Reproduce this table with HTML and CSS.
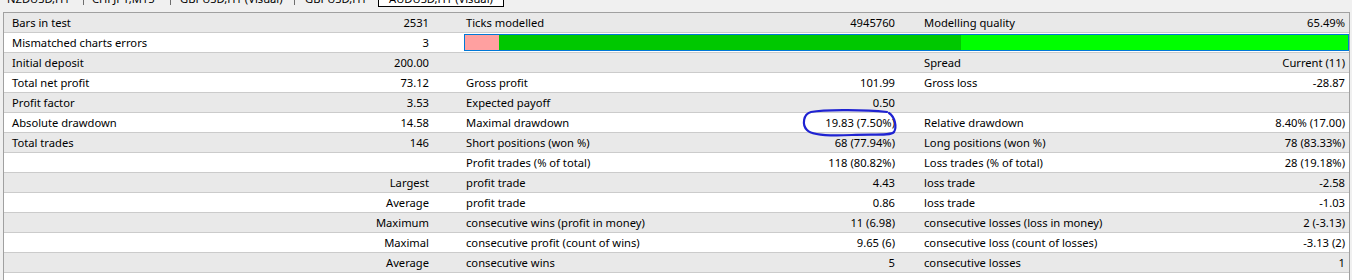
FILE: index.html
```html
<!DOCTYPE html>
<html>
<head>
<meta charset="utf-8">
<link rel="stylesheet" href="styles.css">
</head>
<body>
<div class="tabs">
  <span class="tab t1">NZDUSD,H1</span><span class="sep"></span>
  <span class="tab t2">CHFJPY,M15</span><span class="sep"></span>
  <span class="tab t3">GBPUSD,H1 (Visual)</span><span class="sep"></span>
  <span class="tab t4">GBPUSD,H1</span>
  <span class="tab active">AUDUSD,H1 (Visual)</span>
</div>
<div class="report">
  <div class="row alt">
    <div class="c l1">Bars in test</div><div class="c v1">2531</div>
    <div class="c l2">Ticks modelled</div><div class="c v2">4945760</div>
    <div class="c l3">Modelling quality</div><div class="c v3">65.49%</div>
  </div>
  <div class="row">
    <div class="c l1">Mismatched charts errors</div><div class="c v1">3</div>
    <div class="c barcell">
      <div class="bar"><span class="seg pink"></span><span class="seg dark"></span><span class="seg bright"></span></div>
    </div>
  </div>
  <div class="row alt">
    <div class="c l1">Initial deposit</div><div class="c v1">200.00</div>
    <div class="c l2"></div><div class="c v2"></div>
    <div class="c l3">Spread</div><div class="c v3">Current (11)</div>
  </div>
  <div class="row">
    <div class="c l1">Total net profit</div><div class="c v1">73.12</div>
    <div class="c l2">Gross profit</div><div class="c v2">101.99</div>
    <div class="c l3">Gross loss</div><div class="c v3">-28.87</div>
  </div>
  <div class="row alt">
    <div class="c l1">Profit factor</div><div class="c v1">3.53</div>
    <div class="c l2">Expected payoff</div><div class="c v2">0.50</div>
    <div class="c l3"></div><div class="c v3"></div>
  </div>
  <div class="row">
    <div class="c l1">Absolute drawdown</div><div class="c v1">14.58</div>
    <div class="c l2">Maximal drawdown</div><div class="c v2">19.83 (7.50%)</div>
    <div class="c l3">Relative drawdown</div><div class="c v3">8.40% (17.00)</div>
  </div>
  <div class="row alt">
    <div class="c l1">Total trades</div><div class="c v1">146</div>
    <div class="c l2">Short positions (won %)</div><div class="c v2">68 (77.94%)</div>
    <div class="c l3">Long positions (won %)</div><div class="c v3">78 (83.33%)</div>
  </div>
  <div class="row">
    <div class="c l1"></div><div class="c v1"></div>
    <div class="c l2">Profit trades (% of total)</div><div class="c v2">118 (80.82%)</div>
    <div class="c l3">Loss trades (% of total)</div><div class="c v3">28 (19.18%)</div>
  </div>
  <div class="row alt">
    <div class="c l1"></div><div class="c v1">Largest</div>
    <div class="c l2">profit trade</div><div class="c v2">4.43</div>
    <div class="c l3">loss trade</div><div class="c v3">-2.58</div>
  </div>
  <div class="row">
    <div class="c l1"></div><div class="c v1">Average</div>
    <div class="c l2">profit trade</div><div class="c v2">0.86</div>
    <div class="c l3">loss trade</div><div class="c v3">-1.03</div>
  </div>
  <div class="row alt">
    <div class="c l1"></div><div class="c v1">Maximum</div>
    <div class="c l2">consecutive wins (profit in money)</div><div class="c v2">11 (6.98)</div>
    <div class="c l3">consecutive losses (loss in money)</div><div class="c v3">2 (-3.13)</div>
  </div>
  <div class="row">
    <div class="c l1"></div><div class="c v1">Maximal</div>
    <div class="c l2">consecutive profit (count of wins)</div><div class="c v2">9.65 (6)</div>
    <div class="c l3">consecutive loss (count of losses)</div><div class="c v3">-3.13 (2)</div>
  </div>
  <div class="row alt">
    <div class="c l1"></div><div class="c v1">Average</div>
    <div class="c l2">consecutive wins</div><div class="c v2">5</div>
    <div class="c l3">consecutive losses</div><div class="c v3">1</div>
  </div>
  <svg class="circle" width="100" height="36" viewBox="0 0 100 36">
    <path d="M87 7 C60 4 22 5 11 7 C3 9 2 20 7 25 C12 31 32 31 52 30 C72 29 91 31 94 27 C97 22 95 12 89 8" fill="none" stroke="#1f23d2" stroke-width="2.2" stroke-linecap="round"/>
  </svg>
</div>
</body>
</html>
```

FILE: styles.css
```css
html, body {
  margin: 0;
  padding: 0;
  background: #f0f0f0;
  font-family: "Noto Sans", "Open Sans", sans-serif;
  font-size: 11.2px;
  color: #000;
}

.tabs {
  height: 12px;
  overflow: hidden;
  display: flex;
  align-items: flex-start;
  padding-left: 7px;
  background: #f0f0f0;
}

.tab {
  display: block;
  flex: none;
  line-height: 16px;
  margin-top: -9px;
  white-space: nowrap;
  color: #000;
}

.t1 { width: 76px; }
.t2 { width: 78px; margin-left: 8px; }
.t3 { width: 114px; margin-left: 9px; }
.t4 { width: 73px; margin-left: 10px; }

.sep {
  display: block;
  flex: none;
  width: 1px;
  height: 5px;
  background: #6e6e6e;
}

.tab.active {
  width: 114px;
  height: 15px;
  padding-left: 10px;
  background: #fff;
  border: 1px solid #000;
  border-top: none;
  margin-top: -9px;
}

.report {
  position: relative;
  margin-left: 3px;
  width: 1345px;
  height: 267px;
  background: #fff;
  border-top: 1px solid #a0a0a0;
  border-left: 1px solid #a0a0a0;
  border-right: 1px solid #a0a0a0;
}

.row {
  display: grid;
  grid-template-columns: 236px 195px 225px 241px 219px 1fr;
  height: 19px;
  line-height: 19px;
  border-bottom: 1px solid #cbcbcb;
  background: #fff;
}

.row.alt {
  background: #e9e9e9;
}

.c {
  white-space: nowrap;
  overflow: hidden;
}

.l1 { padding-left: 8px; }
.v1 { text-align: right; padding-right: 6px; }
.l2 { padding-left: 31px; }
.v2 { text-align: right; padding-right: 6px; }
.l3 { padding-left: 23px; }
.v3 { text-align: right; padding-right: 4px; }

.barcell {
  grid-column: 3 / 7;
  display: flex;
  align-items: center;
  padding-left: 29px;
}

.bar {
  flex: 1;
  display: flex;
  height: 15px;
  border: 1px solid #0078d7;
}

.seg { display: block; height: 100%; }
.pink { width: 34px; background: #ffa0a0; }
.dark { width: 462px; background: #00c800; }
.bright { flex: 1; background: #00ff00; }

.circle {
  position: absolute;
  left: 796px;
  top: 92px;
}
```
